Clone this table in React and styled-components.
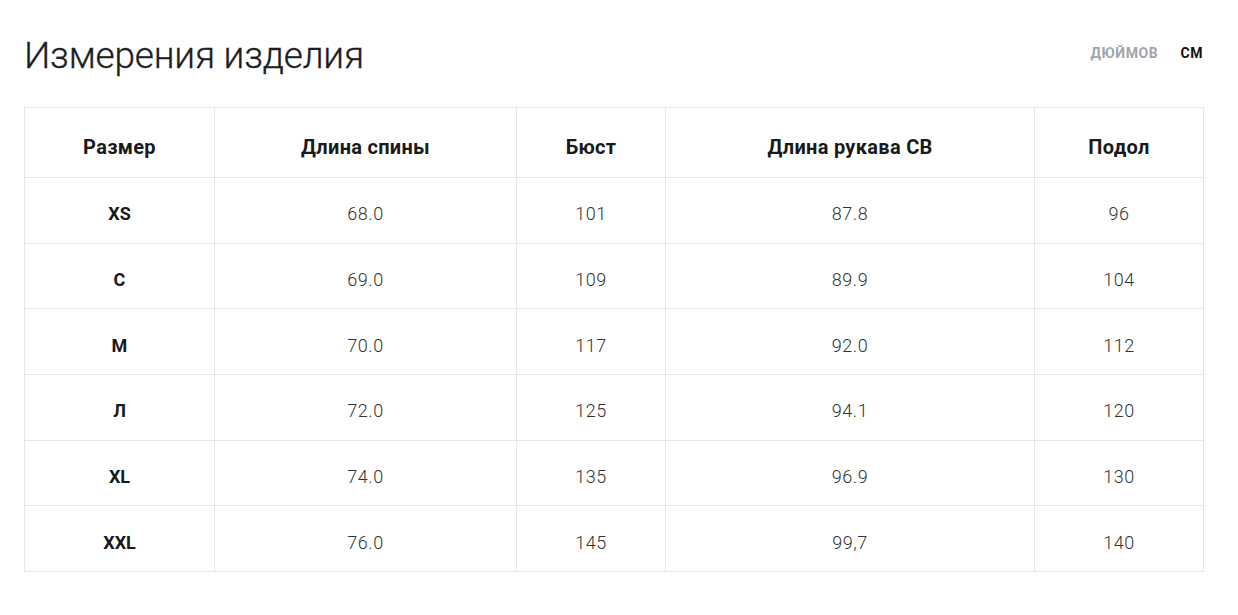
import React from 'react'
import styled, { createGlobalStyle } from 'styled-components'

const GlobalStyle = createGlobalStyle`
	body {
		margin: 0;
		background: #fff;
		font-family: Roboto, "Liberation Sans", sans-serif;
		color: #222;
	}
`

const Page = styled.div`
	padding: 30px 35px 0 24px;
	width: 1179px;
`

const Header = styled.div`
	display: flex;
	justify-content: space-between;
	align-items: flex-start;
	height: 77px;
`

const Title = styled.h1`
	margin: 0;
	font-size: 37px;
	font-weight: 300;
	letter-spacing: -0.2px;
	line-height: 52px;
	color: #1e1e1e;
	-webkit-text-stroke: 0.3px #1e1e1e;
`

const Units = styled.div`
	display: flex;
	gap: 22px;
	padding-top: 15px;
`

const Unit = styled.span`
	font-size: 14px;
	font-weight: 700;
	letter-spacing: 0.6px;
	color: ${(props) => (props.active ? '#111' : '#a0a4ab')};
`

const Table = styled.table`
	width: 1179px;
	border-collapse: collapse;
	table-layout: fixed;
	border: 1px solid #e6e6e6;
`

const HeadCell = styled.th`
	height: 70px;
	border: 1px solid #e6e6e6;
	font-size: 20px;
	font-weight: 700;
	color: #1a1a1a;
	text-align: center;
	letter-spacing: 0.3px;
	padding: 9px 0 0;
	box-sizing: border-box;
`

const Cell = styled.td`
	height: 65.67px;
	border: 1px solid #e6e6e6;
	text-align: center;
	padding: 7px 0 0;
	box-sizing: border-box;
	font-size: 18px;
	font-weight: ${(props) => (props.bold ? 700 : 300)};
	color: ${(props) => (props.bold ? '#1a1a1a' : '#333')};
	letter-spacing: ${(props) => (props.bold ? '0' : '0.5px')};
`

const columns = [
	{ title: 'Размер', width: 190 },
	{ title: 'Длина спины', width: 302 },
	{ title: 'Бюст', width: 149 },
	{ title: 'Длина рукава СВ', width: 369 },
	{ title: 'Подол', width: 169 }
]

const rows = [
	['XS', '68.0', '101', '87.8', '96'],
	['С', '69.0', '109', '89.9', '104'],
	['М', '70.0', '117', '92.0', '112'],
	['Л', '72.0', '125', '94.1', '120'],
	['XL', '74.0', '135', '96.9', '130'],
	['XXL', '76.0', '145', '99,7', '140']
]

const App = () => (
	<>
		<GlobalStyle />
		<Page>
			<Header>
				<Title>Измерения изделия</Title>
				<Units>
					<Unit>ДЮЙМОВ</Unit>
					<Unit active>СМ</Unit>
				</Units>
			</Header>
			<Table>
				<colgroup>
					{columns.map((col) => <col key={col.title} style={{ width: col.width }} />)}
				</colgroup>
				<thead>
					<tr>
						{columns.map((col) => <HeadCell key={col.title}>{col.title}</HeadCell>)}
					</tr>
				</thead>
				<tbody>
					{rows.map((row) => (
						<tr key={row[0]}>
							{row.map((value, i) => (
								<Cell key={i} bold={i === 0}>{value}</Cell>
							))}
						</tr>
					))}
				</tbody>
			</Table>
		</Page>
	</>
)

export default App
